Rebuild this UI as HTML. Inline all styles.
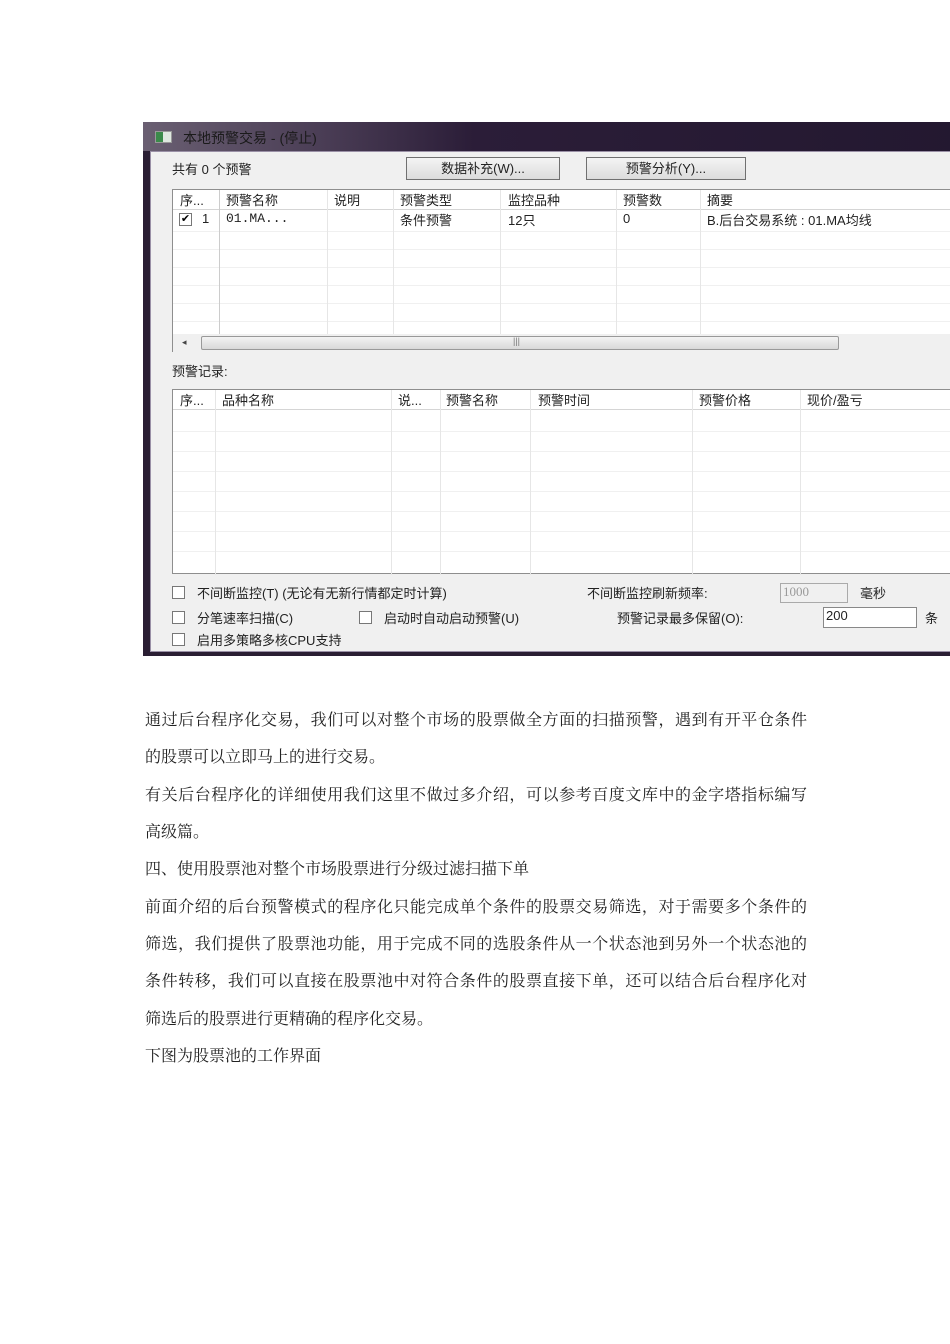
<!DOCTYPE html>
<html><head><meta charset="utf-8"><style>
*{margin:0;padding:0;box-sizing:border-box}
body{width:950px;height:1344px;background:#fff;position:relative;overflow:hidden;font-family:"Liberation Sans","Noto Sans CJK SC",sans-serif}
.a{position:absolute;white-space:nowrap}
.win{position:absolute;left:143px;top:122px;width:820px;height:534px;background:#2a1e33;overflow:hidden}
.title{position:absolute;left:0;top:0;width:100%;height:29px;background:linear-gradient(90deg,#6a5f72 0,#4a3d55 180px,#2b1d38 330px,#231830 100%)}
.body{position:absolute;left:7px;top:29px;right:0;bottom:4px;background:#f0f0f0;border:1px solid #9a90a6}
.t{font-size:13px;color:#222}
.grid{position:absolute;background:#fff;border:1px solid #8e8e8e}
.hd{position:absolute;left:0;top:0;right:0;height:20px;background:#fff;border-bottom:1px solid #d5d5d5}
.vl{position:absolute;top:0;width:1px;background:#e6e6e6}
.hl{position:absolute;left:0;right:0;height:1px;background:#f0f0f0}
.btn{position:absolute;border:1px solid #707070;background:linear-gradient(#f4f4f4,#dcdcdc);font-size:13px;text-align:center;line-height:21px;color:#222}
.cb{position:absolute;width:13px;height:13px;border:1px solid #777;background:#fff}
.p{position:absolute;left:145px;width:662px;font-family:"Liberation Serif","Noto Serif CJK SC",serif;font-size:16px;color:#222;line-height:20px;text-align:justify;text-align-last:justify;white-space:nowrap}
.p.n{text-align-last:left}
</style></head><body>
<div class="win">
 <div class="title"></div>
 <div class="a" style="left:12px;top:9px;width:17px;height:12px;background:#dfe8e0;border:1px solid #999"><div style="width:7px;height:10px;background:#3a8a4a"></div></div>
 <div class="a t" style="left:40px;top:6px;font-size:14px;color:#1a1a1a">本地预警交易 - (停止)</div>
 <div class="body"></div>
</div>
<div class="a t" style="left:172px;top:159px">共有 0 个预警</div>
<div class="btn" style="left:406px;top:157px;width:154px;height:23px">数据补充(W)...</div>
<div class="btn" style="left:586px;top:157px;width:160px;height:23px">预警分析(Y)...</div>

<div class="grid" style="left:172px;top:189px;width:790px;height:163px">
 <div class="hd"></div>
 <div class="hl" style="top:41px"></div><div class="hl" style="top:59px"></div><div class="hl" style="top:77px"></div><div class="hl" style="top:95px"></div><div class="hl" style="top:113px"></div><div class="hl" style="top:131px"></div>
 <div class="vl" style="left:46px;height:145px;background:#ccc"></div><div class="vl" style="left:154px;height:145px"></div><div class="vl" style="left:220px;height:145px"></div><div class="vl" style="left:327px;height:145px"></div><div class="vl" style="left:443px;height:145px"></div><div class="vl" style="left:527px;height:145px"></div>
 <div class="a" style="left:0;top:144px;right:0;height:18px;background:#f0f0f0"></div>
 <div class="a" style="left:28px;top:146px;width:638px;height:14px;background:linear-gradient(#f3f3f3,#d8d8d8);border:1px solid #999;border-radius:2px"></div>
 <div class="a" style="left:9px;top:147px;font-size:9px;color:#444">◂</div>
 <div class="a" style="left:340px;top:146px;font-size:9px;color:#777">|||</div>
</div>
<div class="a t" style="left:180px;top:190px">序...</div>
<div class="a t" style="left:226px;top:190px">预警名称</div>
<div class="a t" style="left:334px;top:190px">说明</div>
<div class="a t" style="left:400px;top:190px">预警类型</div>
<div class="a t" style="left:508px;top:190px">监控品种</div>
<div class="a t" style="left:623px;top:190px">预警数</div>
<div class="a t" style="left:707px;top:190px">摘要</div>
<div class="cb" style="left:179px;top:213px;font-size:11px;line-height:11px;text-align:center">✔</div>
<div class="a t" style="left:202px;top:211px">1</div>
<div class="a t" style="left:226px;top:211px;font-family:'Liberation Mono',monospace">01.MA...</div>
<div class="a t" style="left:400px;top:210px">条件预警</div>
<div class="a t" style="left:508px;top:210px">12只</div>
<div class="a t" style="left:623px;top:211px">0</div>
<div class="a t" style="left:707px;top:210px">B.后台交易系统 : 01.MA均线</div>

<div class="a t" style="left:172px;top:361px">预警记录:</div>
<div class="grid" style="left:172px;top:389px;width:790px;height:185px">
 <div class="hd"></div>
 <div class="hl" style="top:41px"></div><div class="hl" style="top:61px"></div><div class="hl" style="top:81px"></div><div class="hl" style="top:101px"></div><div class="hl" style="top:121px"></div><div class="hl" style="top:141px"></div><div class="hl" style="top:161px"></div>
 <div class="vl" style="left:42px;height:185px"></div><div class="vl" style="left:218px;height:185px"></div><div class="vl" style="left:267px;height:185px"></div><div class="vl" style="left:357px;height:185px"></div><div class="vl" style="left:519px;height:185px"></div><div class="vl" style="left:627px;height:185px"></div>
</div>
<div class="a t" style="left:180px;top:390px">序...</div>
<div class="a t" style="left:222px;top:390px">品种名称</div>
<div class="a t" style="left:398px;top:390px">说...</div>
<div class="a t" style="left:446px;top:390px">预警名称</div>
<div class="a t" style="left:538px;top:390px">预警时间</div>
<div class="a t" style="left:699px;top:390px">预警价格</div>
<div class="a t" style="left:807px;top:390px">现价/盈亏</div>

<div class="cb" style="left:172px;top:586px"></div>
<div class="a t" style="left:197px;top:583px">不间断监控(T) (无论有无新行情都定时计算)</div>
<div class="a t" style="left:587px;top:583px">不间断监控刷新频率:</div>
<div class="a" style="left:780px;top:583px;width:68px;height:20px;border:1px solid #aaa;background:#f0f0f0;font-size:13px;color:#999;padding-left:2px;font-family:'Liberation Serif',serif">1000</div>
<div class="a t" style="left:860px;top:583px">毫秒</div>
<div class="cb" style="left:172px;top:611px"></div>
<div class="a t" style="left:197px;top:608px">分笔速率扫描(C)</div>
<div class="cb" style="left:359px;top:611px"></div>
<div class="a t" style="left:384px;top:608px">启动时自动启动预警(U)</div>
<div class="a t" style="left:617px;top:608px">预警记录最多保留(O):</div>
<div class="a" style="left:823px;top:607px;width:94px;height:21px;border:1px solid #888;background:#fff;font-size:13px;color:#222;padding-left:2px">200</div>
<div class="a t" style="left:925px;top:608px">条</div>
<div class="cb" style="left:172px;top:633px"></div>
<div class="a t" style="left:197px;top:630px">启用多策略多核CPU支持</div>

<div class="p" style="top:711px">通过后台程序化交易，我们可以对整个市场的股票做全方面的扫描预警，遇到有开平仓条件</div>
<div class="p n" style="top:748px">的股票可以立即马上的进行交易。</div>
<div class="p" style="top:786px">有关后台程序化的详细使用我们这里不做过多介绍，可以参考百度文库中的金字塔指标编写</div>
<div class="p n" style="top:823px">高级篇。</div>
<div class="p n" style="top:860px">四、使用股票池对整个市场股票进行分级过滤扫描下单</div>
<div class="p" style="top:898px">前面介绍的后台预警模式的程序化只能完成单个条件的股票交易筛选，对于需要多个条件的</div>
<div class="p" style="top:935px">筛选，我们提供了股票池功能，用于完成不同的选股条件从一个状态池到另外一个状态池的</div>
<div class="p" style="top:972px">条件转移，我们可以直接在股票池中对符合条件的股票直接下单，还可以结合后台程序化对</div>
<div class="p n" style="top:1010px">筛选后的股票进行更精确的程序化交易。</div>
<div class="p n" style="top:1047px">下图为股票池的工作界面</div>
</body></html>
